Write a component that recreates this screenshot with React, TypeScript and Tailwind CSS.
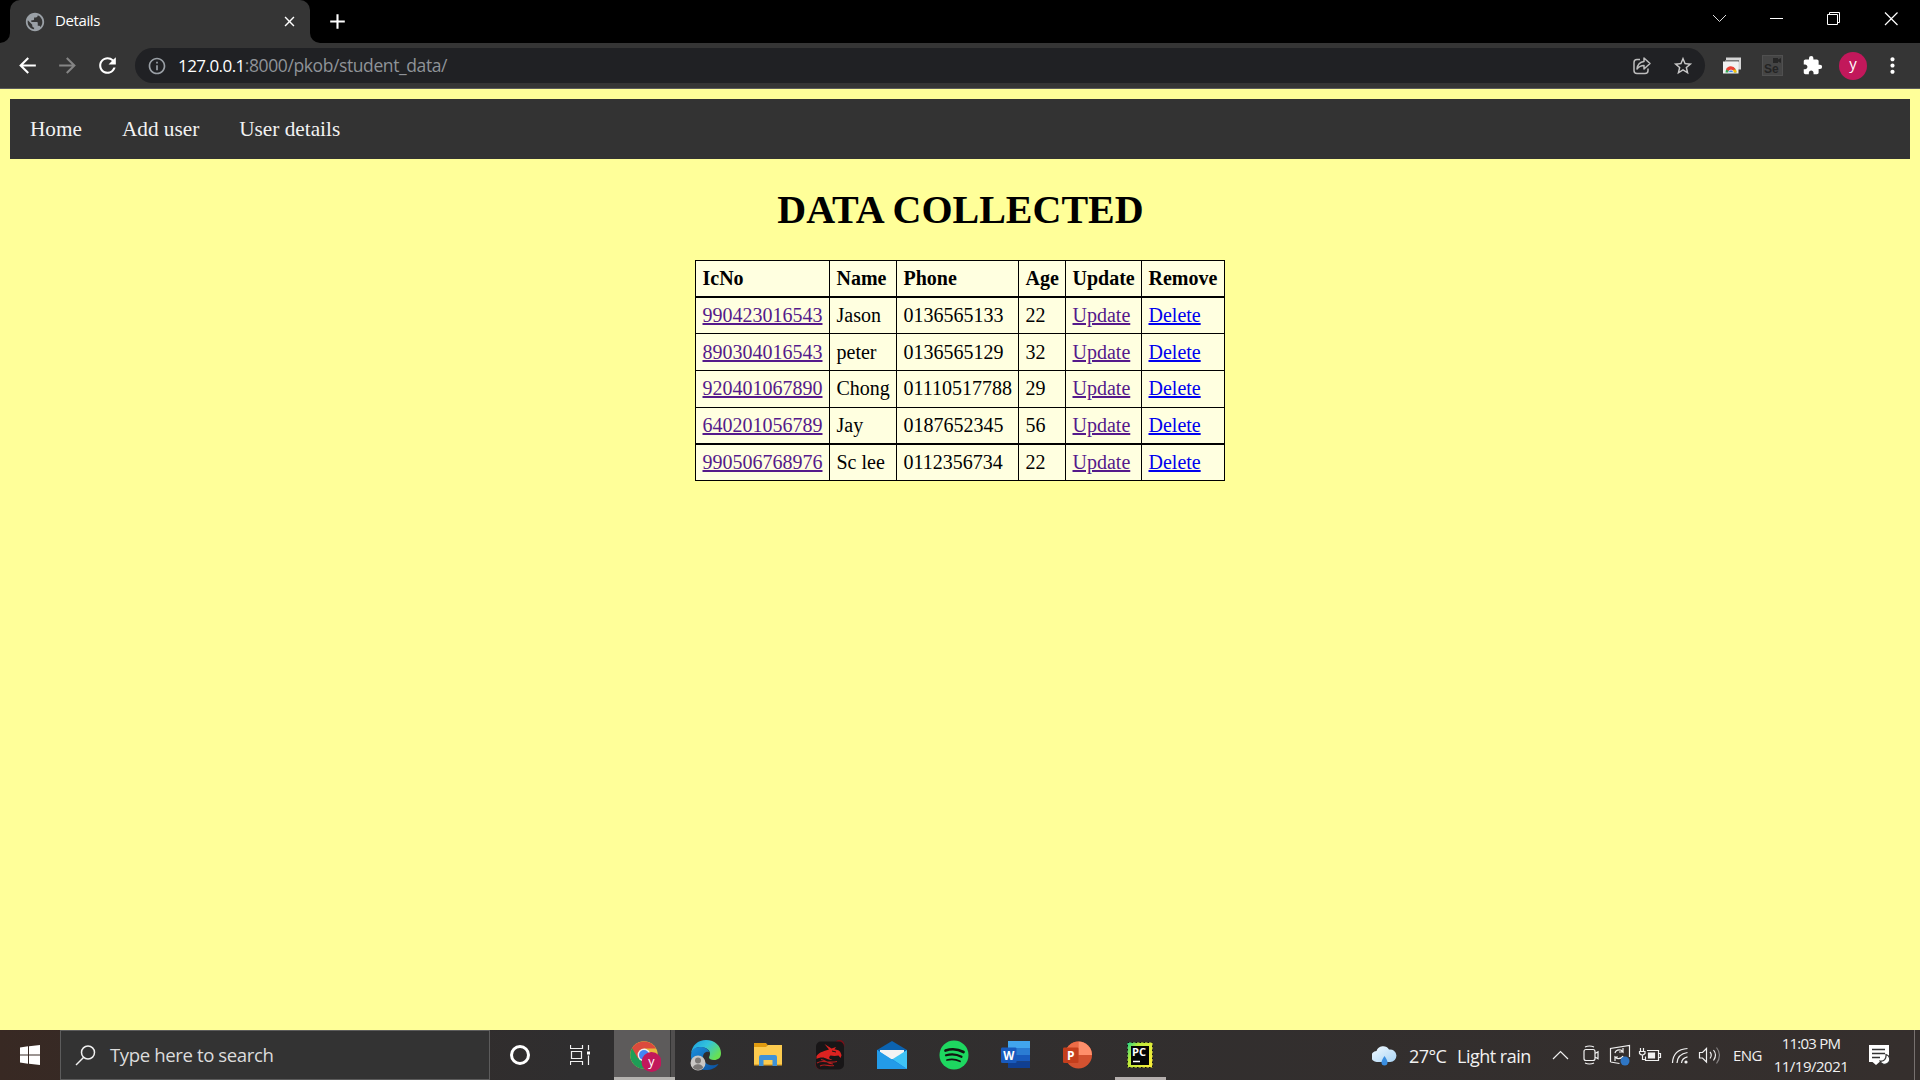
import type { ReactNode } from "react";
import {
  MdAdd,
  MdArrowBack,
  MdArrowForward,
  MdClose,
  MdExtension,
  MdInfoOutline,
  MdMoreVert,
  MdPublic,
  MdRefresh,
  MdStarBorder,
} from "react-icons/md";

const people = [
  { ic: "990423016543", name: "Jason", phone: "0136565133", age: "22", row: "h-[36px] [&>td]:border-b" },
  { ic: "890304016543", name: "peter", phone: "0136565129", age: "32", row: "h-[37px] [&>td]:border-b [&>td]:pt-px" },
  { ic: "920401067890", name: "Chong", phone: "01110517788", age: "29", row: "h-[37px] [&>td]:border-b [&>td]:pb-px" },
  { ic: "640201056789", name: "Jay", phone: "0187652345", age: "56", row: "h-[37px] [&>td]:border-b-2" },
  { ic: "990506768976", name: "Sc lee", phone: "0112356734", age: "22", row: "h-[36px] [&>td]:border-b" },
];

function TabStrip() {
  return (
    <div className="flex h-[43px] bg-black text-white">
      <div className="flex w-[10px] items-end bg-[#353535]">
        <div className="h-full w-full rounded-br-[10px] bg-black" />
      </div>
      <div className="bg-black">
        <div className="flex h-[43px] w-[300px] items-center rounded-t-[10px] bg-[#353535] pl-[14px] pr-[12px]">
          <MdPublic className="size-[22px] text-[#9aa0a6]" />
          <span className="mb-[3px] ml-[9px] flex-1 text-[15px] tracking-[-0.4px]">Details</span>
          <MdClose className="size-[17px]" />
        </div>
      </div>
      <div className="w-[10px] bg-[#353535]">
        <div className="h-full w-full rounded-bl-[10px] bg-black" />
      </div>
      <MdAdd className="ml-[5px] mt-[9px] size-[25px]" />
      <div className="flex-1" />
      <svg className="h-[43px] w-[232px]" viewBox="0 0 232 43" fill="none" stroke="#fff" strokeWidth="1">
        <path d="M25 15l6.500 6.500L38 15" stroke="#ddd" />
        <path d="M82 18.500h13" />
        <path d="M139.500 14.500h10v10h-10zM141.500 14.500v-2h10v10h-2" />
        <path d="M197 12.500l12.500 12.500M209.500 12.500L197 25" strokeWidth="1.200" />
      </svg>
    </div>
  );
}

function Toolbar() {
  return (
    <div className="flex h-[46px] shrink-0 items-center border-b border-[#5c5c5c] bg-[#353535] text-white">
      <MdArrowBack className="ml-[15px] size-[25px]" />
      <MdArrowForward className="ml-[15px] size-[25px] text-[#858585]" />
      <MdRefresh className="ml-[15px] size-[25px]" />
      <div className="ml-[15px] flex h-[35px] w-[1570px] items-center rounded-full bg-[#202124] pl-[12px] pr-[11px]">
        <MdInfoOutline className="size-[20px] text-[#9aa0a6]" />
        <span className="ml-[11px] text-[17px] tracking-[-0.55px]">127.0.0.1</span>
        <span className="flex-1 text-[17.500px] tracking-[-0.4px] text-[#8f9398]">:8000/pkob/student_data/</span>
        <svg className="mr-[20px] size-[20px]" viewBox="0 0 20 20" fill="none" stroke="#bdbdbd" strokeWidth="1.500">
          <path d="M8 3.500H5Q2 3.500 2 6.500v8Q2 17.500 5 17.500h8Q16 17.500 16 14.500v-2" />
          <path d="M12 2v3.500C7.500 6 5.500 8.500 5 13c2-2.500 4-3.500 7-3.500V13l6-5.500z" strokeLinejoin="round" />
        </svg>
        <MdStarBorder className="size-[22px] text-[#c8c8c8]" />
      </div>
      <svg className="ml-[17px] size-[20px]" viewBox="0 0 20 20">
        <path d="M4 1.500h15v12H4z" fill="#d5d5d5" />
        <path d="M3 4h14v2H3z" fill="#777" />
        <path d="M1 5.500h15.500v12H1z" fill="#f1f1f1" />
        <path d="M3.500 16.500a5.500 5.500 0 0 1 11 0z" fill="#34a853" />
        <path d="M4 13.500a5.300 5.300 0 0 1 9.500-.5l-4.500 3z" fill="#ea4335" />
        <path d="M11 14l2.800-.5a5 5 0 0 1 .7 3h-4z" fill="#fbbc05" />
        <path d="M6.500 16.500a2.500 2.500 0 0 1 5 0z" fill="#4285f4" stroke="#fff" strokeWidth=".7" />
      </svg>
      <div className="ml-[20px] flex size-[21px] flex-col items-end border border-[#505050] bg-[#454545]">
        <svg className="mr-px mt-[2px] h-[5px] w-[8px]" viewBox="0 0 8 5" fill="#262626"><path d="M0 0h5v1.500L8 0v5L5 3.500V5H0z" /></svg>
        <span className="w-full pl-px font-['Liberation_Sans'] text-[12px] font-bold leading-[12px] text-[#242424]">Se</span>
      </div>
      <MdExtension className="ml-[19px] size-[21px]" />
      <div className="ml-[16px] flex size-[28px] items-center justify-center rounded-full bg-[#c2185b] pb-[4px] text-[15px]">y</div>
      <MdMoreVert className="ml-[13px] size-[25px]" />
    </div>
  );
}

function Cell({ children }: { children: ReactNode }) {
  return <td className="border-r border-black p-0 pl-[6.500px] align-middle leading-[23px]">{children}</td>;
}

function Page() {
  return (
    <main className="h-[941px] bg-[#ffff99] px-[10px] pt-[10px] font-['Liberation_Serif',serif]">
      <nav className="flex h-[60px] items-center gap-[40px] bg-[#333] px-[20px] pt-[2px] text-[21.250px] text-[#f2f2f2]">
        <a>Home</a>
        <a>Add user</a>
        <a>User details</a>
      </nav>
      <h1 className="mt-[28px] pl-px text-center text-[40px] font-bold leading-[46px]">DATA COLLECTED</h1>
      <table className="mx-auto mt-[27px] w-[530px] table-fixed border-separate border-spacing-0 border-l border-t border-black bg-[#ffffe0] text-[20px] text-black">
        <colgroup>
          <col className="w-[134px]" />
          <col className="w-[67px]" />
          <col className="w-[122px]" />
          <col className="w-[47px]" />
          <col className="w-[76px]" />
          <col className="w-[83px]" />
        </colgroup>
        <thead>
          <tr className="h-[37px] text-left [&>th]:border-b-2 [&>th]:border-r [&>th]:border-black [&>th]:p-0 [&>th]:pl-[6.500px] [&>th]:leading-[23px]">
            <th>IcNo</th>
            <th>Name</th>
            <th>Phone</th>
            <th>Age</th>
            <th>Update</th>
            <th>Remove</th>
          </tr>
        </thead>
        <tbody>
          {people.map((p) => (
            <tr key={p.ic} className={p.row}>
              <Cell><a className="text-[#551a8b] underline decoration-2">{p.ic}</a></Cell>
              <Cell>{p.name}</Cell>
              <Cell>{p.phone}</Cell>
              <Cell>{p.age}</Cell>
              <Cell><a className="text-[#551a8b] underline decoration-2">Update</a></Cell>
              <Cell><a className="text-[#0000ee] underline decoration-2">Delete</a></Cell>
            </tr>
          ))}
        </tbody>
      </table>
    </main>
  );
}

function ChromeIcon() {
  return (
    <svg className="size-[32px]" viewBox="0 0 32 32">
      <circle cx="15" cy="15" r="13.800" fill="#e8b93b" />
      <path d="M15 15L3.050 8.100A13.800 13.800 0 0 0 15 28.800l6-10.400z" fill="#1e9e57" />
      <path d="M15 15l-6 3.500L3.050 8.100A13.800 13.800 0 0 1 26.950 8.600H15z" fill="#dc4a3d" />
      <circle cx="15" cy="15" r="6.400" fill="#eee" />
      <circle cx="15" cy="15" r="5" fill="#4285f4" />
      <circle cx="22.500" cy="22" r="10" fill="#c2185b" />
      <text x="22.500" y="25.500" textAnchor="middle" fontSize="12.500" fill="#fff" fontFamily="Open Sans">y</text>
    </svg>
  );
}

function EdgeIcon() {
  return (
    <svg className="size-[32px]" viewBox="0 0 32 32">
      <defs>
        <linearGradient id="edgeTop" x1="0" x2="1" y1="0" y2=".6">
          <stop offset="0" stopColor="#1a9be0" />
          <stop offset=".5" stopColor="#33c3dc" />
          <stop offset="1" stopColor="#68e052" />
        </linearGradient>
        <linearGradient id="edgeSide" x1="0" x2="1" y1="0" y2="1">
          <stop offset="0" stopColor="#1b8fdc" />
          <stop offset="1" stopColor="#0b4f9e" />
        </linearGradient>
      </defs>
      <path d="M1 15C2 6 8 1 16 1c9 0 15 6 15 13 0 5-3 7-7 7-3 0-5-1-5-2.500 0-1 1-1.500 1-4C20 10 14 8 10 8 6 8 2 11 1 15z" fill="url(#edgeTop)" />
      <path d="M1 17C1 11 5 8 10 8c5 0 8 2 9.500 5C15 12 13 15 13 18c0 7 7 9 12 8 1.500-.3 3-1.500 3.500-1C26 29 21 31 16 31 7 31 1 25 1 17z" fill="url(#edgeSide)" />
      <circle cx="8" cy="24" r="7.500" fill="#c9c7c5" />
      <circle cx="8" cy="21.500" r="3" fill="#7b7876" />
      <path d="M3 29c0-5 10-5 10 0a8 8 0 0 1-10 0z" fill="#7b7876" />
    </svg>
  );
}

function FolderIcon() {
  return (
    <svg className="size-[30px]" viewBox="0 0 30 30">
      <path d="M1 3h12l2 2.500V8H1z" fill="#e09b10" />
      <path d="M1 7h12l2-2h14v20H1z" fill="#fccb4f" />
      <path d="M1 24h28v1.500H1z" fill="#e9ad2f" />
      <path d="M6 26V17q0-2 2-2h14q2 0 2 2v9h-4.500v-6h-9v6z" fill="#3f92d6" />
    </svg>
  );
}

function DragonIcon() {
  return (
    <svg className="size-[30px]" viewBox="0 0 30 30">
      <circle cx="24.500" cy="5" r="5" fill="#7c0f18" />
      <circle cx="5.500" cy="24.500" r="5" fill="#7c0f18" />
      <rect x="1" y="1.500" width="28" height="28" rx="5" fill="#181617" />
      <path d="M1.500 16C5 11.500 10 11 14 9.500L9.500 4l7 4.500 4.500-1.500-1.500 2.500c4 0 6.500 2 7 6L25.500 18l-2-2.500-4 .5-4-.5c-2.500 2-1 3.500 2 4.500-5 0-7-2.500-10-2.500-3 0-4 .5-6 1.500z" fill="#dc2220" />
      <path d="M2 23c6-4 10 1 20-1.500M5 26c5-3 9 1 14-.5M6 19.500c5 1 7 4.500 12 4.500" fill="none" stroke="#b51d1e" strokeWidth="1.100" />
      <path d="M17 11l4 1" stroke="#181617" />
    </svg>
  );
}

function MailIcon() {
  return (
    <svg className="size-[30px]" viewBox="0 0 30 30">
      <path d="M0 10L15 1l15 9v8H0z" fill="#0b63b0" />
      <path d="M3 10h24v10H3z" fill="#f3f3f3" />
      <path d="M0 10l15 10v9H0z" fill="#29a3e8" />
      <path d="M30 10L0 29h30z" fill="#3fc3f5" />
      <path d="M0 29h30L15 19z" fill="#1583d8" />
      <path d="M0 10l30 19H0z" fill="#239be8" />
    </svg>
  );
}

function SpotifyIcon() {
  return (
    <svg className="size-[30px]" viewBox="0 0 30 30" fill="none" stroke="#12140f" strokeLinecap="round">
      <circle cx="15" cy="15" r="14.500" fill="#1ed760" stroke="none" />
      <path d="M6.500 10.500c6-2 13-1.200 18 1.500" strokeWidth="2.700" />
      <path d="M7 15.300c5-1.500 11-1 15.500 1.500" strokeWidth="2.200" />
      <path d="M8 20c4.500-1.200 9-.7 13 1.300" strokeWidth="1.800" />
    </svg>
  );
}

function WordIcon() {
  return (
    <svg className="mr-[2px] size-[30px]" viewBox="0 0 30 30">
      <path d="M8 1h22v7H8z" fill="#41a5ee" />
      <path d="M8 8h22v7H8z" fill="#2b7cd3" />
      <path d="M8 15h22v6.500H8z" fill="#185abd" />
      <path d="M8 21.500h22V28H8z" fill="#103f91" />
      <rect x="1" y="7.500" width="15.500" height="15.500" rx="1.200" fill="#185abd" />
      <text x="8.700" y="19.500" textAnchor="middle" fontSize="11.500" fontWeight="700" fill="#fff" fontFamily="Open Sans">W</text>
    </svg>
  );
}

function PowerPointIcon() {
  return (
    <svg className="mr-[2px] size-[30px]" viewBox="0 0 30 30">
      <circle cx="16.500" cy="15" r="13.500" fill="#d35230" />
      <path d="M16.500 15V1.500A13.500 13.500 0 0 0 3 15z" fill="#ed6c47" />
      <path d="M16.500 1.500A13.500 13.500 0 0 1 30 15H16.500z" fill="#ff8f6b" />
      <rect x="1" y="7.500" width="15.500" height="15.500" rx="1.200" fill="#c43e1c" />
      <text x="8.700" y="19.500" textAnchor="middle" fontSize="12" fontWeight="700" fill="#fff" fontFamily="Open Sans">P</text>
    </svg>
  );
}

function PyCharmIcon() {
  return (
    <svg className="size-[28px]" viewBox="0 0 28 28">
      <defs>
        <linearGradient id="pc" x1="0" x2="1" y1="0" y2=".6">
          <stop offset="0" stopColor="#21d789" />
          <stop offset=".35" stopColor="#b9ea3a" />
          <stop offset="1" stopColor="#f5ee3a" />
        </linearGradient>
      </defs>
      <rect x="1.500" y="1.500" width="25" height="25" fill="url(#pc)" stroke="#111" strokeDasharray="1.500 2.500" />
      <path d="M5 5h18v19H5z" fill="#050505" />
      <text x="6" y="14.500" fontSize="10.500" fontWeight="700" fill="#fff" fontFamily="Open Sans" textLength="14" lengthAdjust="spacingAndGlyphs">PC</text>
      <path d="M7 20.500h7" stroke="#fff" strokeWidth="1.500" />
    </svg>
  );
}

function TaskbarApp({ children, running = false }: { children: ReactNode; running?: boolean }) {
  return (
    <div className="flex w-[62px] flex-col items-center">
      <div className="flex h-[47px] items-center pt-[3px]">{children}</div>
      {running && <div className="h-[3px] w-[51px] bg-[#b5afae]" />}
    </div>
  );
}

function Tray() {
  return (
    <div className="flex items-center text-[#f1f1f1]">
      <svg className="h-[22px] w-[27px]" viewBox="0 0 27 22">
        <defs>
          <linearGradient id="cloud" x1="0" x2="1" y1="0" y2="1">
            <stop offset="0" stopColor="#f2faff" />
            <stop offset="1" stopColor="#a9d4f5" />
          </linearGradient>
        </defs>
        <path d="M5 18a5.500 5.500 0 0 1-.5-11A7 7 0 0 1 17 5.500a6.300 6.300 0 1 1 1 12.500z" fill="url(#cloud)" />
        <path d="M12.500 12c2 3 3 4.500 3 6.500a3 3 0 0 1-6 0c0-2 1-3.500 3-6.500z" fill="#3a8ee0" />
      </svg>
      <span className="ml-[10px] mt-[2px] w-[48px] whitespace-nowrap text-[18px] tracking-[-0.6px]">27°C</span>
      <span className="mt-[2px] w-[95px] whitespace-nowrap text-[18px] tracking-[-0.5px]">Light rain</span>
      <svg className="h-[50px] w-[180px]" viewBox="0 0 180 50" fill="none" stroke="#f1f1f1" strokeWidth="1.200">
        <path d="M1 29l7.500-7.500L16 29" />
        <path d="M34 19.500h7q2 0 2 2v7q0 2-2 2h-7q-2 0-2-2v-7q0-2 2-2zM43 23.500l3-1.800v7L43 27M33 17q4.500-2 9 0M33 33q4.500 2 9 0" />
        <path d="M58.500 32V18.500l19-3V27M58.500 32l9 1.500M63 23q1-4 6-3l2 2v-4m0 4h-4M71 26q-1 3-6 2.500l-2-1.500v4m0-4h3" />
        <circle cx="73" cy="31" r="4.500" fill="#2f76c4" stroke="none" />
        <path d="M95 20.500h11.500v10h-13v-4M106.500 23.500h2v4h-2M88.500 18v3M91.500 18v3M87.500 21.500h5.500v2q-2.700 3-5.500 0zM90.500 25.500v4h3" />
        <path d="M96.500 23h6v5h-6z" fill="#f1f1f1" />
        <path d="M120.500 33Q121 19.500 135.500 18.500M125 33Q125.500 24 135.500 22.500M129.500 33Q130 28 135.500 26.800" />
        <circle cx="134" cy="32" r="1.600" fill="#f1f1f1" stroke="none" />
        <path d="M147.500 22.500h3l4-4v13.500l-4-4h-3zM158 22q2.500 3 0 6.500M161.500 20q4 5 0 10.500" />
        <path d="M164.500 17.500q6 7.500 0 16" stroke="#858282" />
      </svg>
      <span className="ml-px w-[40px] text-[15px] tracking-[-0.6px]">ENG</span>
      <div className="flex w-[76px] flex-col items-center whitespace-nowrap text-[15px] leading-[23px]">
        <span className="tracking-[-0.75px]">11:03 PM</span>
        <span className="tracking-[-0.5px]">11/19/2021</span>
      </div>
      <svg className="ml-[19px] h-[22px] w-[22px]" viewBox="0 0 22 22">
        <path d="M1 1h20v17H11.500L8 21l-3.500-3H1z" fill="#fff" />
        <path d="M4 5.500h13M4 9.500h13M4 13.500h8" stroke="#333" strokeWidth="1.300" />
        <path d="M18 10.500a5 5 0 1 1-6 6.500c4 1 6.500-2.500 6-6.500z" fill="#fff" stroke="#333" strokeWidth="1.200" />
      </svg>
      <div className="ml-[24px] mr-[5px] h-[50px] w-px bg-[#77716f]" />
    </div>
  );
}

function Taskbar() {
  return (
    <footer className="flex h-[50px] bg-linear-to-r from-[#382923] via-[#2f2e2f] via-30% to-[#352f2d]">
      <div className="flex w-[60px] items-center justify-center">
        <svg className="size-[20px]" viewBox="0 0 20 20" fill="#fff">
          <path d="M0 2.500L8 1.300v8.200H0zM9 1.200L20 0v9.500H9zM0 10.500h8v8.200L0 17.500zM9 10.500h11V20L9 18.800z" />
        </svg>
      </div>
      <div className="flex w-[430px] items-center border border-[#5c5c5c] bg-[#333] pl-[14px] text-[#dcdcdc]">
        <svg className="size-[21px]" viewBox="0 0 21 21" fill="none" stroke="#f1f1f1" strokeWidth="1.500">
          <circle cx="13" cy="7.500" r="6.500" />
          <path d="M8.500 12.500L1 20" />
        </svg>
        <span className="ml-[14px] text-[18.600px] tracking-[-0.4px]">Type here to search</span>
      </div>
      <div className="flex w-[60px] items-center justify-center">
        <div className="size-[20px] rounded-full border-[3px] border-white" />
      </div>
      <div className="flex w-[63px] items-center pl-[20px]">
        <svg className="size-[20px]" viewBox="0 0 20 20" fill="none" stroke="#f1f1f1" strokeWidth="1.200">
          <path d="M.5 0v3.500h12V0M.5 20v-3.500h12V20M1.500 6.500h10v7h-10zM18.500 0v5M18.500 10.500V20" />
          <path d="M17 6.500h3v3h-3z" fill="#fff" stroke="none" />
        </svg>
      </div>
      <div className="flex w-[62px] flex-col">
        <div className="flex h-[47px]">
          <div className="ml-px flex w-[56px] items-center bg-[#5d5b5b] pl-[15px] pt-[5px]"><ChromeIcon /></div>
          <div className="w-[5px] border-l border-[#333] bg-[#504e4e]" />
        </div>
        <div className="ml-px h-[3px] w-[61px] bg-[#b5b3b0]" />
      </div>
      <TaskbarApp><EdgeIcon /></TaskbarApp>
      <TaskbarApp><FolderIcon /></TaskbarApp>
      <TaskbarApp><DragonIcon /></TaskbarApp>
      <TaskbarApp><MailIcon /></TaskbarApp>
      <TaskbarApp><SpotifyIcon /></TaskbarApp>
      <TaskbarApp><WordIcon /></TaskbarApp>
      <TaskbarApp><PowerPointIcon /></TaskbarApp>
      <TaskbarApp running><PyCharmIcon /></TaskbarApp>
      <div className="flex-1" />
      <Tray />
    </footer>
  );
}

export default function App() {
  return (
    <div className="flex h-[1080px] w-[1920px] flex-col overflow-hidden font-['Open_Sans',sans-serif]">
      <TabStrip />
      <Toolbar />
      <Page />
      <Taskbar />
    </div>
  );
}
